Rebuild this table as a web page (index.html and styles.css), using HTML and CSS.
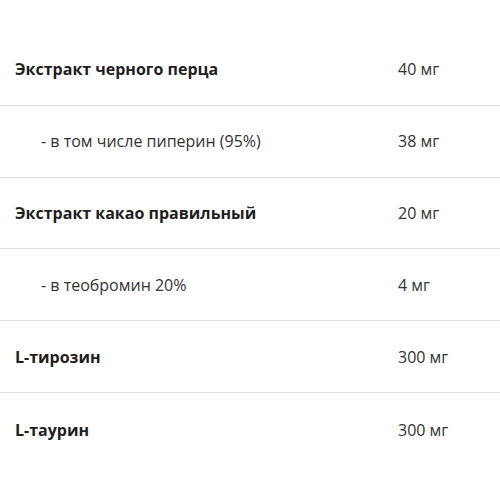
FILE: index.html
```html
<!DOCTYPE html>
<html lang="ru">
<head>
<meta charset="utf-8">
<link rel="stylesheet" href="styles.css">
</head>
<body>
<div class="table">
  <div class="row"><div class="name bold">Экстракт черного перца</div><div class="val">40 мг</div></div>
  <div class="row"><div class="name sub">- в том числе пиперин (95%)</div><div class="val">38 мг</div></div>
  <div class="row"><div class="name bold">Экстракт какао правильный</div><div class="val">20 мг</div></div>
  <div class="row"><div class="name sub">- в теобромин 20%</div><div class="val">4 мг</div></div>
  <div class="row"><div class="name bold">L-тирозин</div><div class="val">300 мг</div></div>
  <div class="row last"><div class="name bold">L-таурин</div><div class="val">300 мг</div></div>
</div>
</body>
</html>
```
FILE: styles.css
```css
html, body {
  margin: 0;
  padding: 0;
  background: #fff;
}
body {
  font-family: "Open Sans", "Noto Sans", sans-serif;
  font-size: 16px;
  color: #333;
}
.table {
  padding-top: 34px;
}
.row {
  display: grid;
  grid-template-columns: 398px 1fr;
  align-items: center;
  height: 70.8px;
  border-bottom: 1px solid #e2e2e2;
}
.row.last {
  border-bottom: none;
  height: 74px;
}
.name {
  padding-left: 15px;
}
.bold {
  font-weight: 700;
  color: #1e1e1e;
}
.sub {
  padding-left: 41px;
}
.val {
  color: #333;
}
```
